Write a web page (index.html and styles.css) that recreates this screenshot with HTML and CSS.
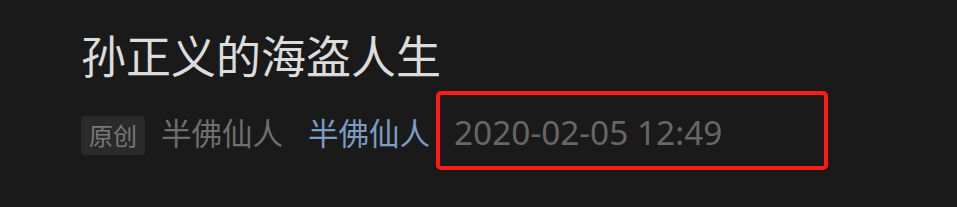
FILE: index.html
```html
<!DOCTYPE html>
<html lang="zh-CN">
<head>
    <meta charset="UTF-8">
    <title>孙正义的海盗人生</title>
    <link rel="stylesheet" href="styles.css">
</head>
<body>
    <div class="article-head">
        <h1 class="title">孙正义的海盗人生</h1>
        <div class="meta">
            <span class="tag">原创</span>
            <span class="author">半佛仙人</span>
            <a class="account" href="#">半佛仙人</a>
            <span class="date">2020-02-05 12:49</span>
        </div>
    </div>
</body>
</html>
```

FILE: styles.css
```css
body {
    margin: 0;
    background: #1a1a1a;
    font-family: "Noto Sans", "Noto Sans CJK SC", sans-serif;
}
.article-head {
    padding: 27px 0 0 81px;
}
.title {
    margin: 0;
    font-size: 45px;
    font-weight: normal;
    line-height: 60px;
    color: #dcdcdc;
}
.meta {
    display: flex;
    align-items: baseline;
    margin-top: 4px;
}
.tag {
    display: inline-block;
    width: 64px;
    height: 39px;
    line-height: 39px;
    text-align: center;
    font-size: 24px;
    color: #787878;
    background: #2a2a2a;
    border-radius: 4px;
    margin-right: 16px;
}
.author {
    font-size: 30.5px;
    color: #6e6e6e;
    margin-right: 25px;
}
.account {
    font-size: 30.5px;
    color: #7d9cc3;
    text-decoration: none;
    margin-right: 6px;
}
.date {
    display: inline-block;
    font-size: 33.4px;
    color: #666;
    padding: 14px 102px 11px 14px;
    border: 4px solid #ff1b12;
    border-radius: 5px;
}
```
